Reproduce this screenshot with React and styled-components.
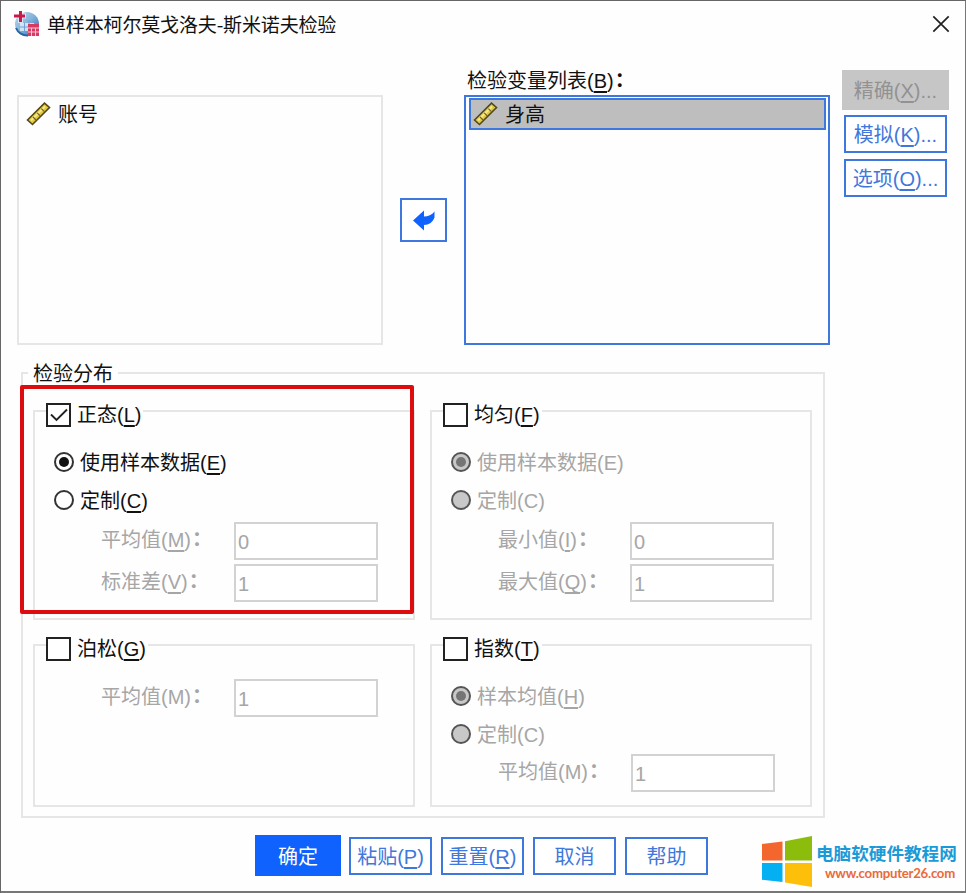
import React from 'react'
import styled, { createGlobalStyle, css } from 'styled-components'

const blue = '#3f78dc'
const line = '#e6e6e6'

const GlobalStyle = createGlobalStyle`
  * {
    box-sizing: border-box;
  }

  body {
    margin: 0;
    background: #fff;
    font-family: 'Liberation Sans', 'Noto Sans CJK SC', sans-serif;
    font-size: 20px;
    line-height: 24px;
    color: #111;
  }
`

const Window = styled.main`
  position: relative;
  width: 966px;
  height: 893px;
  overflow: hidden;

  background: #fefefe;
  box-shadow: inset 1px 1px 0 #666, inset -1px -2px 0 #777;
  white-space: nowrap;
`

/* Title bar */

const TitleBar = styled.header`
  display: flex;
  align-items: center;
  height: 48px;
  padding: 0 16px 0 13px;
`

const Title = styled.h1`
  flex: 1;
  margin: 0 0 0 7px;

  font-family: 'Noto Sans CJK SC', sans-serif;
  font-size: 19px;
  font-weight: 400;
  letter-spacing: -0.15px;
`

/* Variable lists */

const Variables = styled.section`
  display: flex;
  align-items: flex-end;
  height: 297px;
  padding-left: 17px;
`

const ListLabel = styled.div`
  padding-left: 3px;
  margin-bottom: 2px;
`

const List = styled.div`
  width: 366px;
  height: 250px;
  padding: ${p => (p.$active ? '1px 2px 0 3px' : '1px 2px')};

  border: 2px solid ${p => (p.$active ? blue : line)};
`

const ListItem = styled.div`
  display: flex;
  align-items: center;
  height: 32px;
  padding: 1px 0 0 3px;

  border: 2px solid transparent;

  ${p =>
    p.$selected &&
    css`
      padding-left: 2px;
      border-color: ${blue};
      background: #bebebe;
    `};

  svg {
    margin: -2px 7px 0 0;
  }
`

const MoveButton = styled.button`
  display: flex;
  align-items: center;
  justify-content: center;
  width: 47px;
  height: 44px;
  margin: 0 17px 103px;
  padding: 0;

  border: 2px solid ${blue};
  background: #fff;
`

const SideButtons = styled.div`
  display: flex;
  flex-direction: column;
  align-items: center;
  align-self: flex-start;
  gap: 6px;
  margin: 22px 0 0 12px;
`

/* Buttons */

const Button = styled.button`
  width: ${p => p.$width || 83}px;
  height: 38px;
  padding: 2px 0 0;

  border: 2px solid ${blue};
  background: #fff;
  color: ${blue};
  font: inherit;

  ${p =>
    p.$primary &&
    css`
      width: 86px;
      height: 41px;
      margin-right: -1px;
      border-color: #0f62fe;
      background: #0f62fe;
      color: #fff;
    `};

  &:disabled {
    width: 107px;
    height: 40px;
    margin-bottom: -1px;
    border-color: #c6c6c6;
    background: #c6c6c6;
    color: #929292;
  }
`

const Key = styled.span`
  text-decoration: underline;
  text-decoration-thickness: 1.5px;
  text-underline-offset: 3px;
  text-decoration-skip-ink: none;
`

const Colon = styled.span`
  position: relative;
  top: -1px;
  left: 1px;
  font-weight: 700;
`

const Footer = styled.footer`
  display: flex;
  align-items: center;
  gap: 9px;
  margin-top: 17px;
  padding-left: 255px;
`

/* Distribution */

const Distribution = styled.section`
  width: 804px;
  height: 446px;
  margin: 27px 0 0 21px;
  padding-left: 10px;

  border: 2px solid ${line};
`

const DistributionTitle = styled.h2`
  width: fit-content;
  margin: -12px 0 24px -5px;
  padding: 0 5px 0 5px;

  background: #fefefe;
  font-size: 20px;
  font-weight: 400;
`

const Groups = styled.div`
  display: grid;
  grid-template-columns: 382px 382px;
  grid-template-rows: 210px 163px;
  gap: 24px 15px;
`

const Group = styled.div`
  border: 2px solid ${line};
`

const GroupHeader = styled.label`
  display: flex;
  align-items: center;
  width: fit-content;
  height: 24px;
  margin: -9px 0 23px 11px;
  padding-right: 2px;

  background: #fefefe;
`

const Box = styled.span`
  display: flex;
  align-items: center;
  justify-content: center;
  width: 25px;
  height: 24px;
  margin-right: 6px;

  border: 2px solid #222;
  background: #fff;
`

const RadioRow = styled.label`
  display: flex;
  align-items: center;
  height: 24px;
  padding-top: 2px;
  margin-left: 19px;

  color: ${p => (p.$disabled ? '#a6a6a6' : '#111')};

  & + & {
    margin-top: ${p => p.$gap || 15}px;
  }
`

const Dot = styled.span`
  display: flex;
  align-items: center;
  justify-content: center;
  width: 20px;
  height: 20px;
  margin: -2px 6px 0 0;

  border: 2px solid ${p => (p.$disabled ? '#555' : '#333')};
  border-radius: 50%;
  background: ${p => (p.$disabled ? '#c8c8c8' : '#fff')};

  &::after {
    content: '';
    width: 10px;
    height: 10px;
    border-radius: 50%;
    background: ${p =>
      p.$checked ? (p.$disabled ? '#757575' : '#111') : 'transparent'};
  }
`

const Fields = styled.div`
  display: flex;
  flex-direction: column;
  gap: 4px;
  margin: ${p => p.$top}px 0 0 66px;
`

const Field = styled.label`
  display: flex;
  align-items: center;
  color: #a6a6a6;
`

const FieldLabel = styled.span`
  width: ${p => p.$width}px;
  padding-bottom: 3px;
`

const Input = styled.input`
  width: 144px;
  height: 38px;
  padding: 2px 2px 0;

  border: 2px solid #d2d2d2;
  border-radius: 0;
  background: #fff;
  color: #a6a6a6;
  font: inherit;
`

/* Overlays */

const Highlight = styled.div`
  position: absolute;
  left: 20px;
  top: 385px;
  width: 394px;
  height: 229px;

  border: 4px solid #dd0c0f;
  border-radius: 2px;
  pointer-events: none;
`

const Brand = styled.aside`
  position: absolute;
  left: 762px;
  top: 836px;
  display: flex;
  gap: 4px;
`

const BrandText = styled.div`
  display: flex;
  flex-direction: column;
  padding-top: 6px;
`

const BrandName = styled.strong`
  color: #1b9ad8;
  font-family: 'Noto Sans CJK SC', sans-serif;
  font-size: 17.6px;
  line-height: 22px;
`

const BrandUrl = styled.strong`
  padding-left: 9px;
  color: #ea6a39;
  font-family: Lato, sans-serif;
  font-size: 13.2px;
  line-height: 18px;
  letter-spacing: -0.25px;
`

/* Icons */

const AppIcon = () => (
  <svg width="27" height="27" viewBox="0 0 27 27">
    <defs>
      <linearGradient id="globe" x1="0" y1="0" x2="1" y2="1">
        <stop offset="0" stopColor="#c4dcf0" />
        <stop offset="0.5" stopColor="#7fb0da" />
        <stop offset="1" stopColor="#2e67a8" />
      </linearGradient>
    </defs>
    <circle cx="14" cy="13" r="12" fill="url(#globe)" />
    <path d="M7 12h14v8H7z" fill="#e4f0fa" opacity="0.8" />
    <path d="M7 16h14M11.500 12v8M16 9v11" stroke="#6fa3d2" strokeWidth="1" />
    <path d="M3 17a12 12 0 0 0 12 7.500" fill="none" stroke="#2865a5" strokeWidth="2" />
    <path d="M7.500 0v12M1 5h12" stroke="#fff" strokeWidth="5" opacity="0.6" />
    <path d="M7.500 0v11M1 5h11" stroke="#c9184a" strokeWidth="3" />
    <path d="M15 13h11v12H15z" fill="#d63a62" />
    <path d="M15 17h11M15 21h11M18.500 17v8M22.500 17v8" stroke="#f7c6d1" strokeWidth="1" />
  </svg>
)

const Ruler = () => (
  <svg width="25" height="24" viewBox="0 0 25 24">
    <path
      d="M1.500 18 18.500 1.200 23.500 5.500 6.500 22.500Z"
      fill="#e3c93f"
      stroke="#51481f"
      strokeWidth="1.6"
    />
    <path d="m5 18.500 14-14" stroke="#f7e98a" strokeWidth="1.8" />
    <path
      d="m7 15 3 3M11.200 10.800l3 3M15.400 6.600l3 3"
      stroke="#706326"
      strokeWidth="1.2"
    />
  </svg>
)

const Close = () => (
  <svg width="18" height="18" viewBox="0 0 18 18">
    <path d="m1.300 1.300 15.400 15.400M16.700 1.300 1.300 16.700" stroke="#222" strokeWidth="1.700" />
  </svg>
)

const Arrow = () => (
  <svg width="24" height="22" viewBox="0 0 24 22">
    <path
      d="M1 11.500 12 1.500v6C16 7.500 20 6 22.500 2.500v6C21 13 17 16 12 16v5.500Z"
      fill="#0f62fe"
    />
  </svg>
)

const Check = () => (
  <svg width="18" height="14" viewBox="0 0 18 14">
    <path d="m1 6.500 5.500 5.500L17 1.500" fill="none" stroke="#222" strokeWidth="1.900" />
  </svg>
)

const Logo = () => (
  <svg width="50" height="51" viewBox="0 0 50 51">
    <path d="M0 8 20.500 5.500v19H0z" fill="#f3662d" />
    <path d="M23 5.200 50 0v24.500H23z" fill="#8cbd0c" />
    <path d="M0 27h20.500v19L0 43.700z" fill="#05b0f2" />
    <path d="M23 27h27v24l-27-4.500z" fill="#fdbf0a" />
  </svg>
)

/* Marks the mnemonic letter of a caption. */
const Caption = ({ text, letter, plain, colon, after }) => (
  <span>
    {text}({plain ? letter : <Key>{letter}</Key>}){after}
    {colon && <Colon>：</Colon>}
  </span>
)

const groups = [
  {
    name: '正态',
    letter: 'L',
    checked: true,
    radios: [
      { text: '使用样本数据', letter: 'E', checked: true },
      { text: '定制', letter: 'C' },
    ],
    top: 10,
    labelWidth: 133,
    fields: [
      { text: '平均值', letter: 'M', value: '0' },
      { text: '标准差', letter: 'V', value: '1' },
    ],
  },
  {
    name: '均匀',
    letter: 'F',
    disabled: true,
    radios: [
      { text: '使用样本数据', letter: 'E', plain: true, checked: true },
      { text: '定制', letter: 'C', plain: true },
    ],
    top: 10,
    labelWidth: 132,
    fields: [
      { text: '最小值', letter: 'I', value: '0' },
      { text: '最大值', letter: 'Q', value: '1' },
    ],
  },
  {
    name: '泊松',
    letter: 'G',
    radios: [],
    top: -5,
    labelWidth: 133,
    fields: [{ text: '平均值', letter: 'M', plain: true, value: '1' }],
  },
  {
    name: '指数',
    letter: 'T',
    disabled: true,
    gap: 14,
    radios: [
      { text: '样本均值', letter: 'H', checked: true },
      { text: '定制', letter: 'C', plain: true },
    ],
    top: 8,
    labelWidth: 133,
    fields: [{ text: '平均值', letter: 'M', plain: true, value: '1' }],
  },
]

export default function App() {
  return (
    <Window>
      <GlobalStyle />
      <TitleBar>
        <AppIcon />
        <Title>单样本柯尔莫戈洛夫-斯米诺夫检验</Title>
        <Close />
      </TitleBar>

      <Variables>
        <List>
          <ListItem>
            <Ruler />
            账号
          </ListItem>
        </List>
        <MoveButton>
          <Arrow />
        </MoveButton>
        <div>
          <ListLabel>
            <Caption text="检验变量列表" letter="B" colon />
          </ListLabel>
          <List $active>
            <ListItem $selected>
              <Ruler />
              身高
            </ListItem>
          </List>
        </div>
        <SideButtons>
          <Button disabled>
            <Caption text="精确" letter="X" after="..." />
          </Button>
          <Button $width={103}>
            <Caption text="模拟" letter="K" after="..." />
          </Button>
          <Button $width={103}>
            <Caption text="选项" letter="O" after="..." />
          </Button>
        </SideButtons>
      </Variables>

      <Distribution>
        <DistributionTitle>检验分布</DistributionTitle>
        <Groups>
          {groups.map(group => (
            <Group key={group.name}>
              <GroupHeader>
                <Box>{group.checked && <Check />}</Box>
                <Caption text={group.name} letter={group.letter} />
              </GroupHeader>
              {group.radios.map(radio => (
                <RadioRow
                  key={radio.text}
                  $disabled={group.disabled}
                  $gap={group.gap}
                >
                  <Dot $disabled={group.disabled} $checked={radio.checked} />
                  <Caption {...radio} />
                </RadioRow>
              ))}
              <Fields $top={group.top}>
                {group.fields.map(field => (
                  <Field key={field.text}>
                    <FieldLabel $width={group.labelWidth}>
                      <Caption {...field} colon />
                    </FieldLabel>
                    <Input defaultValue={field.value} disabled />
                  </Field>
                ))}
              </Fields>
            </Group>
          ))}
        </Groups>
      </Distribution>

      <Footer>
        <Button $primary>确定</Button>
        <Button>
          <Caption text="粘贴" letter="P" />
        </Button>
        <Button>
          <Caption text="重置" letter="R" />
        </Button>
        <Button>取消</Button>
        <Button>帮助</Button>
      </Footer>

      <Highlight />
      <Brand>
        <Logo />
        <BrandText>
          <BrandName>电脑软硬件教程网</BrandName>
          <BrandUrl>www.computer26.com</BrandUrl>
        </BrandText>
      </Brand>
    </Window>
  )
}
